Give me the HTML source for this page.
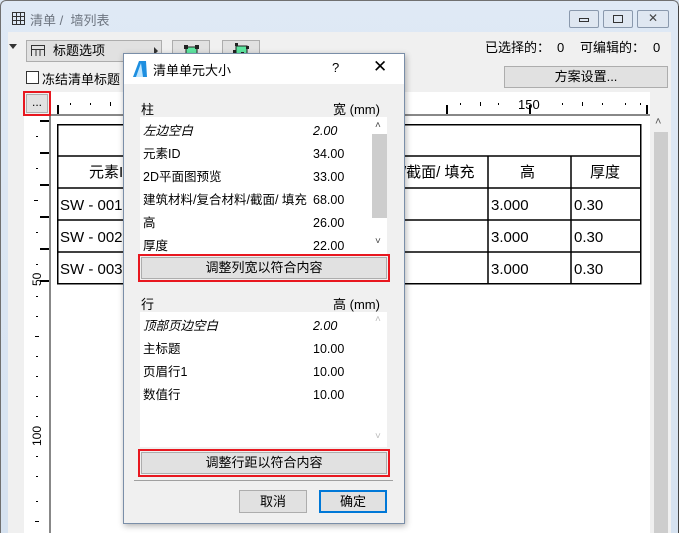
<!DOCTYPE html>
<html><head><meta charset="utf-8"><style>
*{box-sizing:border-box;margin:0;padding:0}
body{width:679px;height:533px;overflow:hidden;background:#dce7f3;font-family:"Liberation Sans","Noto Sans CJK SC",sans-serif;font-size:13px;color:#000;position:relative}
.a{position:absolute;white-space:nowrap}
.btn{position:absolute;background:#e1e1e1;border:1px solid #adadad;text-align:center;white-space:nowrap}
.r{line-height:18px;height:18px}
</style></head><body>
<div class="a" style="left:0;top:0;width:679px;height:533px;border:1px solid #707070;border-bottom:none;border-radius:6px 6px 0 0;background:linear-gradient(#dfe9f5,#d6e2f0)"></div>
<div class="a" style="left:678px;top:6px;width:1px;height:527px;background:#444"></div>
<svg class="a" style="left:12px;top:12px" width="14" height="14"><rect x="0.5" y="0.5" width="12" height="12" fill="none" stroke="#333"/><path d="M4.5 1v12M8.5 1v12M1 4.5h12M1 8.5h12" stroke="#333"/></svg>
<div class="a" style="left:30px;top:10px;color:#6d7580;font-size:13px">清单 /&nbsp; 墙列表</div>
<div class="btn" style="left:569px;top:10px;width:30px;height:18px;border-color:#8a99ad;background:#dfe7f1;border-radius:2px"><div style="margin:7px auto 0;width:10px;height:4px;border:1px solid #333"></div></div>
<div class="btn" style="left:603px;top:10px;width:30px;height:18px;border-color:#8a99ad;background:#dfe7f1;border-radius:2px"><div style="margin:4px auto 0;width:10px;height:8px;border:1px solid #333"></div></div>
<div class="btn" style="left:637px;top:10px;width:32px;height:18px;border-color:#8a99ad;background:#dfe7f1;border-radius:2px;font-size:12px;line-height:15px;color:#444">✕</div>
<div class="a" style="left:8px;top:32px;width:663px;height:501px;background:#f0f0f0"></div>
<div class="a" style="left:9px;top:44px;width:0;height:0;border-left:4px solid transparent;border-right:4px solid transparent;border-top:5px solid #333"></div>
<div class="btn" style="left:26px;top:40px;width:136px;height:22px;text-align:left;padding-left:26px;line-height:20px">标题选项</div>
<svg class="a" style="left:31px;top:45px" width="14" height="12"><path d="M0.5 11V0.5h13V11M0.5 4.5h13M5 4.5V11M9 4.5V11" fill="none" stroke="#333"/></svg>
<div class="a" style="left:154px;top:47px;border-top:4px solid transparent;border-bottom:4px solid transparent;border-left:4px solid #333"></div>
<div class="btn" style="left:172px;top:40px;width:38px;height:22px"></div>
<svg class="a" style="left:184px;top:44px" width="16" height="14"><rect x="2" y="3" width="11" height="11" fill="#5ee6a0" stroke="#222"/><rect x="0" y="1" width="4" height="4" fill="#222"/><rect x="11" y="1" width="4" height="4" fill="#222"/></svg>
<div class="btn" style="left:222px;top:40px;width:38px;height:22px"></div>
<svg class="a" style="left:233px;top:42px" width="18" height="16"><rect x="3" y="4" width="11" height="11" fill="#5ee6a0" stroke="#222"/><rect x="2" y="1" width="3" height="3" fill="#222"/><rect x="13" y="4" width="3" height="3" fill="#222"/><rect x="0" y="8" width="3" height="3" fill="#222"/><rect x="8" y="10" width="3" height="3" fill="#222"/></svg>
<div class="a r" style="left:485px;top:39px;">已选择的：</div>
<div class="a r" style="left:557px;top:39px;">0</div>
<div class="a r" style="left:580px;top:39px;">可编辑的：</div>
<div class="a r" style="left:653px;top:39px;">0</div>
<div class="a" style="left:26px;top:71px;width:13px;height:13px;border:1px solid #333;background:#fff"></div>
<div class="a" style="left:42px;top:69px">冻结清单标题</div>
<div class="btn" style="left:504px;top:66px;width:164px;height:22px;line-height:20px">方案设置...</div>
<div class="a" style="left:50px;top:92px;width:600px;height:22px;background:#fff"></div>
<div class="a" style="left:24px;top:116px;width:26px;height:417px;background:#fff"></div>
<div class="a" style="left:49px;top:114px;width:2px;height:419px;background:#888"></div>
<div class="a" style="left:50px;top:114px;width:600px;height:2px;background:#888"></div>
<svg class="a" style="left:50px;top:92px" width="600" height="22">
<g fill="#000"><rect x="7" y="13" width="2" height="9"/><rect x="396" y="13" width="2" height="9"/><rect x="479" y="13" width="2" height="9"/><rect x="596" y="13" width="2" height="9"/>
<rect x="20" y="11" width="1" height="2"/><rect x="40" y="11" width="1" height="2"/><rect x="60" y="10" width="1" height="4"/><rect x="80" y="11" width="1" height="2"/><rect x="100" y="11" width="1" height="2"/>
<rect x="410" y="11" width="1" height="2"/><rect x="430" y="10" width="1" height="4"/><rect x="448" y="11" width="1" height="2"/><rect x="512" y="11" width="1" height="2"/><rect x="532" y="10" width="1" height="4"/><rect x="552" y="11" width="1" height="2"/><rect x="575" y="11" width="1" height="2"/><rect x="590" y="11" width="1" height="2"/></g>
<text x="468" y="17" font-size="13" font-family="Liberation Sans">150</text></svg>
<svg class="a" style="left:24px;top:116px" width="26" height="417">
<g fill="#000"><rect x="16" y="4" width="9" height="2"/><rect x="16" y="36" width="9" height="2"/><rect x="16" y="68" width="9" height="2"/><rect x="16" y="100" width="9" height="2"/><rect x="16" y="132" width="9" height="2"/><rect x="16" y="164" width="9" height="2"/>
<rect x="12" y="20" width="2" height="1"/><rect x="12" y="52" width="2" height="1"/><rect x="10" y="84" width="4" height="1"/><rect x="12" y="116" width="2" height="1"/><rect x="12" y="148" width="2" height="1"/>
<rect x="12" y="180" width="2" height="1"/><rect x="12" y="200" width="2" height="1"/><rect x="11" y="220" width="4" height="1"/><rect x="12" y="240" width="2" height="1"/><rect x="12" y="260" width="2" height="1"/><rect x="12" y="280" width="2" height="1"/><rect x="12" y="300" width="2" height="1"/><rect x="12" y="340" width="2" height="1"/><rect x="12" y="360" width="2" height="1"/><rect x="12" y="385" width="2" height="1"/><rect x="11" y="405" width="4" height="1"/></g>
<text transform="translate(17,170) rotate(-90)" font-size="12" font-family="Liberation Sans">50</text>
<text transform="translate(17,330) rotate(-90)" font-size="12" font-family="Liberation Sans">100</text></svg>
<div class="a" style="left:23px;top:91px;width:28px;height:25px;border:2px solid #e8171f"></div>
<div class="btn" style="left:26px;top:94px;width:22px;height:19px;line-height:14px;font-size:12px">...</div>
<div class="a" style="left:51px;top:116px;width:599px;height:417px;background:#fff"></div>
<div class="a" style="left:650px;top:114px;width:21px;height:419px;background:#f0f0f0"></div>
<div class="a" style="left:654px;top:132px;width:14px;height:401px;background:#cdcdcd"></div>
<div class="a" style="left:655px;top:116px;font-size:11px;color:#555">˄</div>
<svg class="a" style="left:57px;top:124px" width="585" height="162">
<g stroke="#000" stroke-width="1.5" fill="none"><rect x="0.75" y="0.75" width="583" height="159"/><path d="M0 32h584M0 64h584M0 96h584M0 128h584M431 32v128M514 32v128"/></g>
<g font-family="Liberation Sans,Noto Sans CJK SC,sans-serif" font-size="15"><text x="32" y="53">元素ID</text><text x="463" y="53">高</text><text x="533" y="53">厚度</text><text x="345" y="53">/截面/ 填充</text>
<text x="3" y="86">SW - 001</text><text x="3" y="118">SW - 002</text><text x="3" y="150">SW - 003</text>
<text x="434" y="86">3.000</text><text x="434" y="118">3.000</text><text x="434" y="150">3.000</text>
<text x="517" y="86">0.30</text><text x="517" y="118">0.30</text><text x="517" y="150">0.30</text></g></svg>
<div class="a" style="left:123px;top:53px;width:282px;height:471px;background:#f0f0f0;border:1px solid #7a8ea8;box-shadow:1px 2px 6px rgba(0,0,0,.3)"></div>
<div class="a" style="left:124px;top:54px;width:280px;height:30px;background:#fff"></div>
<svg class="a" style="left:132px;top:60px" width="16" height="18"><path d="M1 17L7 1h7l1 16z" fill="#1e8fe0"/><path d="M4 17L9 3l2 14z" fill="#bfe6ff"/></svg>
<div class="a" style="left:153px;top:60px;font-size:13px">清单单元大小</div>
<div class="a" style="left:332px;top:60px">?</div>
<div class="a" style="left:373px;top:57px;font-size:17px">✕</div>
<div class="a" style="left:141px;top:99px">柱</div>
<div class="a" style="left:333px;top:99px">宽 (mm)</div>
<div class="a" style="left:140px;top:117px;width:247px;height:137px;background:#fff"></div>
<div class="a" style="left:372px;top:134px;width:15px;height:84px;background:#cdcdcd"></div>
<div class="a" style="left:375px;top:120px;font-size:10px;color:#444">˄</div>
<div class="a" style="left:375px;top:236px;font-size:10px;color:#444">˅</div>
<div class="a" style="left:143px;top:120px;line-height:23px;font-size:12.5px">
<i>左边空白</i><br>元素ID<br>2D平面图预览<br>建筑材料/复合材料/截面/ 填充<br>高<br>厚度</div>
<div class="a" style="left:313px;top:120px;line-height:23px;font-size:12.5px"><i>2.00</i><br>34.00<br>33.00<br>68.00<br>26.00<br>22.00</div>
<div class="a" style="left:138px;top:254px;width:252px;height:28px;border:2px solid #e8171f"></div>
<div class="btn" style="left:141px;top:257px;width:246px;height:22px;line-height:20px;font-size:13px">调整列宽以符合内容</div>
<div class="a" style="left:141px;top:294px">行</div>
<div class="a" style="left:333px;top:294px">高 (mm)</div>
<div class="a" style="left:140px;top:312px;width:247px;height:135px;background:#fff"></div>
<div class="a" style="left:375px;top:314px;font-size:10px;color:#bbb">˄</div>
<div class="a" style="left:375px;top:431px;font-size:10px;color:#bbb">˅</div>
<div class="a" style="left:143px;top:315px;line-height:23px;font-size:12.5px"><i>顶部页边空白</i><br>主标题<br>页眉行1<br>数值行</div>
<div class="a" style="left:313px;top:315px;line-height:23px;font-size:12.5px"><i>2.00</i><br>10.00<br>10.00<br>10.00</div>
<div class="a" style="left:138px;top:449px;width:252px;height:28px;border:2px solid #e8171f"></div>
<div class="btn" style="left:141px;top:452px;width:246px;height:22px;line-height:20px;font-size:13px">调整行距以符合内容</div>
<div class="a" style="left:134px;top:480px;width:259px;height:1px;background:#a0a0a0"></div>
<div class="btn" style="left:239px;top:490px;width:68px;height:23px;line-height:21px">取消</div>
<div class="btn" style="left:319px;top:490px;width:68px;height:23px;line-height:19px;border:2px solid #0078d7">确定</div>
</body></html>
